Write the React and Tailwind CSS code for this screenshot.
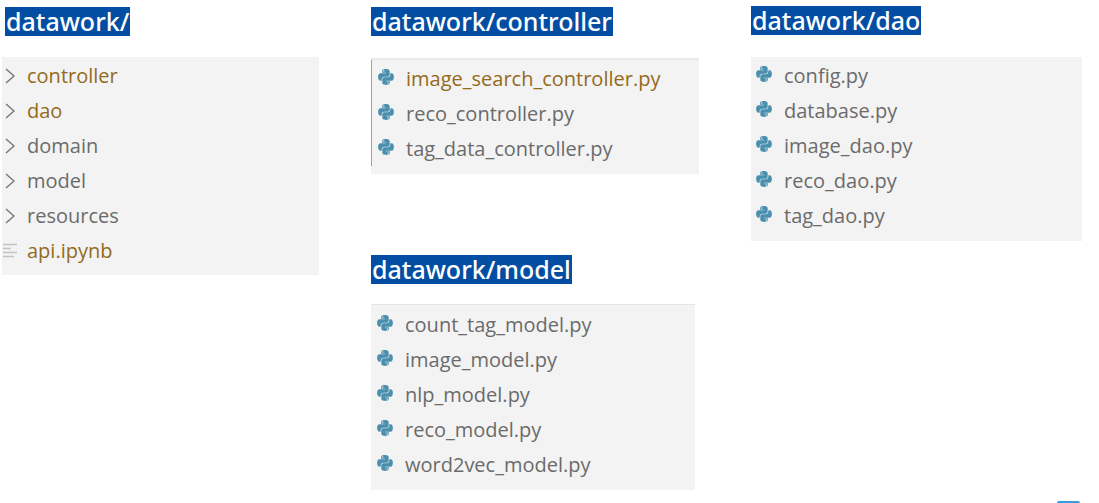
import { FaPython } from "react-icons/fa";

const folders = [
  { name: "controller", modified: true },
  { name: "dao", modified: true },
  { name: "domain" },
  { name: "model" },
  { name: "resources" },
];

const controllerFiles = [
  { name: "image_search_controller.py", modified: true },
  { name: "reco_controller.py" },
  { name: "tag_data_controller.py" },
];

const modelFiles = [
  { name: "count_tag_model.py" },
  { name: "image_model.py" },
  { name: "nlp_model.py" },
  { name: "reco_model.py" },
  { name: "word2vec_model.py" },
];

const daoFiles = [
  { name: "config.py" },
  { name: "database.py" },
  { name: "image_dao.py" },
  { name: "reco_dao.py" },
  { name: "tag_dao.py" },
];

function Heading({ children }) {
  return (
    <h2 className="w-fit bg-[#034ea2] px-px font-['Noto_Sans','Open_Sans',sans-serif] text-[25px] leading-[29px] font-medium text-white">
      {children}
    </h2>
  );
}

function Chevron() {
  return (
    <svg viewBox="0 0 10 16" className="h-4 w-[10px]" fill="none" stroke="#73767b" strokeWidth="1.4" aria-hidden="true">
      <path d="M1 1l8 7-8 7" />
    </svg>
  );
}

function Lines() {
  return (
    <svg viewBox="0 0 14 16" className="h-4 w-[14px]" stroke="#c3c3c3" strokeWidth="1.5" aria-hidden="true">
      <path d="M0 1.5h14M0 5.5h8M0 9.5h14M0 13.5h11" />
    </svg>
  );
}

function Name({ entry }) {
  return <span className={entry.modified ? "text-[#946a1c]" : "text-[#6b6b6b]"}>{entry.name}</span>;
}

function FileList({ files }) {
  return (
    <ul>
      {files.map((file) => (
        <li key={file.name} className="flex h-[35px] items-center gap-[11px]">
          <FaPython className="mb-[3px] size-[18px] shrink-0 text-[#4a8fae]" aria-hidden="true" />
          <Name entry={file} />
        </li>
      ))}
    </ul>
  );
}

export default function App() {
  return (
    <main className="grid min-h-screen grid-cols-[317fr_328fr_331fr] gap-x-[52px] bg-white pr-[17px] pl-[2px] font-['Open_Sans','Noto_Sans',sans-serif] text-[20px] leading-[28px]">
      <section className="pt-[7px]">
        <div className="pl-[3px]">
          <Heading>datawork/</Heading>
        </div>
        <ul className="mt-[21px] bg-[#f3f3f3] pt-px pb-[7px]">
          {folders.map((folder) => (
            <li key={folder.name} className="flex h-[35px] items-center gap-[12px] pl-[3px]">
              <Chevron />
              <Name entry={folder} />
            </li>
          ))}
          <li className="flex h-[35px] items-center gap-[10px] pl-px">
            <Lines />
            <Name entry={{ name: "api.ipynb", modified: true }} />
          </li>
        </ul>
      </section>

      <div className="flex flex-col gap-[81px] pt-[7px]">
        <section>
          <Heading>datawork/controller</Heading>
          <div className="mt-[22px] border-t-2 border-[#e8e8e8] bg-[#f3f3f3] pb-[8px]">
            <div className="border-l border-[#a0a0a0] pt-px pl-[5px]">
              <FileList files={controllerFiles} />
            </div>
          </div>
        </section>
        <section>
          <Heading>datawork/model</Heading>
          <div className="mt-[20px] mr-[4px] border-t border-[#e5e5e5] bg-[#f3f3f3] pt-[2px] pb-[8px] pl-[5px]">
            <FileList files={modelFiles} />
          </div>
        </section>
      </div>

      <div className="flex flex-col justify-between pt-[6px]">
        <section>
          <Heading>datawork/dao</Heading>
          <div className="mt-[22px] bg-[#f3f3f3] pt-px pb-[8px] pl-[4px]">
            <FileList files={daoFiles} />
          </div>
        </section>
        <div className="mr-[2px] h-[2px] w-[23px] self-end rounded-t-sm bg-[#3a9bdc]" />
      </div>
    </main>
  );
}
